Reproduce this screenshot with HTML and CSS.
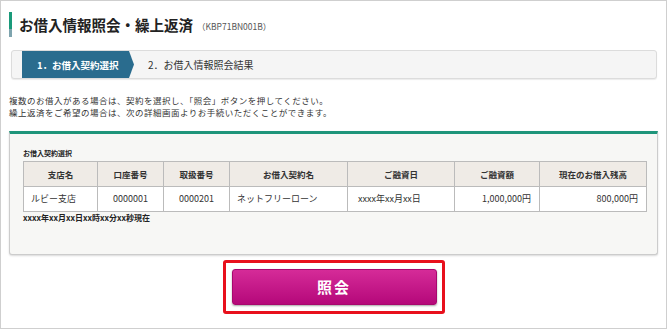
FILE: index.html
```html
<!DOCTYPE html>
<html lang="ja">
<head>
  <meta charset="UTF-8" />
  <title>お借入情報照会・繰上返済</title>
  <link rel="stylesheet" href="styles.css">
</head>
<body>
  <div class="frame">
    <div class="title">
      <span class="title-bar"></span>
      <h1>お借入情報照会・繰上返済</h1>
      <span class="screen-id">（KBP71BN001B）</span>
    </div>

    <div class="steps">
      <div class="step active">1．お借入契約選択</div>
      <div class="step">2．お借入情報照会結果</div>
    </div>

    <p class="lead">
      複数のお借入がある場合は、契約を選択し、「照会」ボタンを押してください。<br>
      繰上返済をご希望の場合は、次の詳細画面よりお手続いただくことができます。
    </p>

    <div class="panel">
      <div class="panel-label">お借入契約選択</div>
      <table class="loans">
        <colgroup>
          <col style="width:74px"><col style="width:66px"><col style="width:66px">
          <col style="width:118px"><col style="width:107px"><col style="width:85px"><col style="width:107px">
        </colgroup>
        <tr>
          <th>支店名</th>
          <th>口座番号</th>
          <th>取扱番号</th>
          <th>お借入契約名</th>
          <th>ご融資日</th>
          <th>ご融資額</th>
          <th>現在のお借入残高</th>
        </tr>
        <tr>
          <td>ルビー支店</td>
          <td class="center">0000001</td>
          <td class="center">0000201</td>
          <td>ネットフリーローン</td>
          <td class="date">xxxx年xx月xx日</td>
          <td class="right">1,000,000円</td>
          <td class="right">800,000円</td>
        </tr>
      </table>
      <div class="timestamp">xxxx年xx月xx日xx時xx分xx秒現在</div>
    </div>

    <div class="actions">
      <div class="highlight">
        <button type="button">照会</button>
      </div>
    </div>
  </div>
</body>
</html>
```

FILE: styles.css
```css
* {
  margin: 0;
  padding: 0;
  box-sizing: border-box;
}

body {
  font-family: "Noto Sans CJK JP", sans-serif;
  color: #333;
  background: #fff;
}

.frame {
  width: 667px;
  height: 329px;
  border: 1px solid #cfcfcf;
  padding: 11px 8px 0 8px;
}

.title {
  display: flex;
  align-items: center;
  height: 25px;
}

.title-bar {
  width: 3px;
  height: 25px;
  background: linear-gradient(#1a9a7a 0, #1a9a7a 68%, #7ea4ae 68%);
}

h1 {
  font-size: 14.5px;
  font-weight: bold;
  color: #222;
  margin-left: 7px;
}

.screen-id {
  font-size: 8.5px;
  color: #555;
  margin-left: 4px;
  padding-top: 2px;
}

.steps {
  display: flex;
  align-items: center;
  height: 29px;
  margin: 13px 1px 0 2px;
  padding-left: 10px;
  background: #f5f5f5;
  border: 1px solid #dcdcdc;
  border-radius: 3px;
  box-shadow: 0 1px 1px rgba(0,0,0,0.08);
}

.step {
  font-size: 10px;
  color: #333;
}

.step.active {
  display: flex;
  align-items: center;
  height: 27px;
  width: 112px;
  padding-left: 15px;
  color: #fff;
  font-weight: bold;
  font-size: 9.5px;
  background: #2a6c8e;
  clip-path: polygon(0 0, calc(100% - 5px) 0, 100% 50%, calc(100% - 5px) 100%, 0 100%);
  margin-right: 14px;
}

.lead {
  font-size: 8.5px;
  line-height: 12.4px;
  letter-spacing: 0.5px;
  margin-top: 15px;
  color: #333;
}

.panel {
  margin-top: 12px;
  background: #f7f7f5;
  border: 1px solid #cccccc;
  border-top: 3px solid #1e957a;
  border-radius: 0 0 3px 3px;
  box-shadow: 0 1px 2px rgba(0,0,0,0.15);
  padding: 15px 12px 34px 13px;
  height: 124px;
}

.panel-label {
  font-size: 7px;
  font-weight: bold;
  line-height: 9px;
  margin-bottom: 3px;
  color: #222;
}

.loans {
  width: 623px;
  border-collapse: collapse;
  table-layout: fixed;
}

.loans th,
.loans td {
  height: 25px;
  border: 1px solid #bbbbbb;
  padding: 0 7px;
  font-size: 9px;
  white-space: nowrap;
}

.loans th {
  background: #efebe6;
  font-weight: bold;
  font-size: 8.5px;
  color: #333;
  text-align: center;
}

.loans td {
  background: #fff;
  color: #333;
}

.loans td.center {
  text-align: center;
}

.loans td.right {
  text-align: right;
  padding-right: 8px;
}

.loans td.date {
  padding-left: 10px;
}

.timestamp {
  font-size: 8px;
  font-weight: bold;
  line-height: 10px;
  margin-top: 1px;
  color: #222;
}

.actions {
  display: flex;
  justify-content: center;
  margin-top: 5px;
}

.highlight {
  border: 3px solid #e8101c;
  border-radius: 3px;
  padding: 6px 5px 6px 6px;
}

button {
  display: block;
  width: 205px;
  height: 36px;
  border: 1px solid #a8076e;
  border-radius: 3px;
  background: linear-gradient(#d52b98, #b5087a);
  box-shadow: 0 1px 2px rgba(0,0,0,0.35);
  color: #fff;
  font-family: "Noto Sans CJK JP", sans-serif;
  font-size: 15px;
  font-weight: bold;
  letter-spacing: 2px;
  cursor: pointer;
}
```
